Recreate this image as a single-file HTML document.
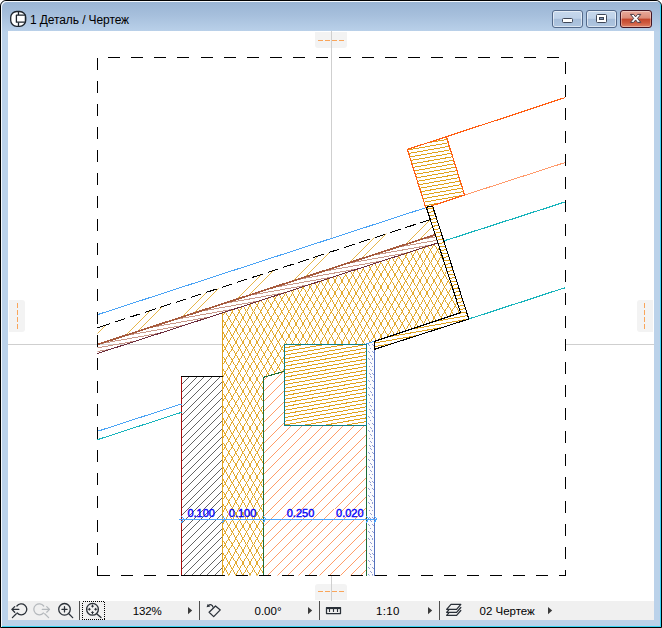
<!DOCTYPE html>
<html><head><meta charset="utf-8"><title>1 Деталь / Чертеж</title>
<style>
html,body{margin:0;padding:0;background:#fff;}
body{width:662px;height:628px;position:relative;overflow:hidden;font-family:"Liberation Sans",sans-serif;}
#win{position:absolute;left:0;top:0;width:660px;height:626px;border:1px solid #000;border-radius:6px 6px 0 0;
 background:linear-gradient(#99b4d3 0px,#a6bfdc 14px,#b9d0e9 30px,#bbd2ea 31px,#bbd2ea 100%);overflow:hidden;}
#win:before{content:"";position:absolute;left:0;top:0;right:0;bottom:0;border-radius:5px 5px 0 0;
 box-shadow:inset 1px 1px 0 0 #f4f8fc, inset -1px -1px 0 0 #3ad4f4;}
#client{position:absolute;left:8px;top:31px;width:646px;height:570px;background:#fff;}
#tbar{position:absolute;left:8px;top:601px;width:646px;height:19px;background:#f0f0f0;}
#title{position:absolute;left:30px;top:10px;font-size:12px;line-height:17px;color:#000;white-space:nowrap;
 letter-spacing:-0.1px;}
.cb{position:absolute;top:10px;height:16px;width:29px;border:1px solid #53698a;border-radius:3px;
 box-shadow:inset 0 0 0 1px rgba(255,255,255,.55);
 background:linear-gradient(#c6d8ec 0,#bfd2e9 46%,#a6bdd9 50%,#afc6e0 100%);}
#bclose{border-color:#431422;background:linear-gradient(#e9aa9c 0,#dc8b78 45%,#c3452c 50%,#cf5a3f 75%,#de8268 100%);
 box-shadow:inset 0 0 0 1px rgba(255,255,255,.35);}
.lbl{position:absolute;top:604px;height:15px;line-height:15px;font-size:11.5px;color:#000;white-space:nowrap;}
svg{position:absolute;left:0;top:0;}
</style></head><body>
<div id="win">
 <div id="client" style="left:7px;top:30px"></div>
 <div id="tbar" style="left:7px;top:600px"></div>
 <div id="title" style="left:29px;top:11px">1 Деталь / Чертеж</div>
 <div class="cb" style="left:551px;top:9px"></div>
 <div class="cb" style="left:585px;top:9px"></div>
 <div class="cb" id="bclose" style="left:619px;top:9px;width:30px"></div>
</div>
<svg width="662" height="628" viewBox="0 0 662 628">
<g clip-path="url(#cView)">
<defs>
<clipPath id="cBlock"><polygon points="407.30,149.40 446.40,136.70 464.60,195.10 425.80,207.70"/></clipPath>
<clipPath id="cL"><polygon points="426.30,207.20 432.70,206.30 468.80,319.00 374.50,349.30 374.50,341.30 460.60,312.70"/></clipPath>
<clipPath id="cBand"><polygon points="97.50,344.50 435.26,234.76 437.91,242.90 97.50,353.50"/></clipPath>
<clipPath id="cGap"><polygon points="97.50,327.70 430.32,219.56 435.26,234.76 97.50,344.50"/></clipPath>
<clipPath id="cIns"><polygon points="222.50,312.89 437.91,242.90 460.60,312.70 374.50,341.30 366.50,343.90 366.50,344.50 284.50,344.50 284.50,371.30 263.50,377.30 263.50,575.50 222.50,575.50"/></clipPath>
<clipPath id="cMas"><polygon points="263.50,377.30 284.50,371.30 284.50,425.50 366.50,425.50 366.50,575.50 263.50,575.50"/></clipPath>
<clipPath id="cBeam"><rect x="284.5" y="344.5" width="82" height="81"/></clipPath>
<clipPath id="cGray"><rect x="181.5" y="376.5" width="41" height="199"/></clipPath>
<clipPath id="cStrip"><polygon points="366.50,343.90 374.50,341.30 374.50,575.50 366.50,575.50"/></clipPath>
<clipPath id="cView"><rect x="8" y="31" width="646" height="570"/></clipPath>
</defs>
<path d="M315,32H347V45a3,3 0 0 1 -3,3H318a3,3 0 0 1 -3,-3Z" fill="#f3f3f3"/>
<path d="M315,600H347V587a3,3 0 0 0 -3,-3H318a3,3 0 0 0 -3,3Z" fill="#f3f3f3"/>
<path d="M9,300V332H22a3,3 0 0 0 3,-3V303a3,3 0 0 0 -3,-3Z" fill="#f3f3f3"/>
<path d="M653,300V332H640a3,3 0 0 1 -3,-3V303a3,3 0 0 1 3,-3Z" fill="#f3f3f3"/>
<path d="M318,40.5 h5 m2,0 h5 m2,0 h5 m2,0 h5" stroke="#f9a55a" stroke-width="1" fill="none"/>
<path d="M318,591.5 h5 m2,0 h5 m2,0 h5 m2,0 h5" stroke="#f9a55a" stroke-width="1" fill="none"/>
<path d="M17.5,303 v5 m0,2 v5 m0,2 v5 m0,2 v5" stroke="#f9a55a" stroke-width="1" fill="none"/>
<path d="M644.5,303 v5 m0,2 v5 m0,2 v5 m0,2 v5" stroke="#f9a55a" stroke-width="1" fill="none"/>
<g stroke="#cfcfcf" stroke-width="1" shape-rendering="crispEdges">
<line x1="331.5" y1="31" x2="331.5" y2="238.63"/>
<line x1="331.5" y1="576" x2="331.5" y2="601"/>
<line x1="8" y1="344.5" x2="222" y2="344.5"/>
<line x1="566" y1="344.5" x2="654" y2="344.5"/>
</g>
<g shape-rendering="crispEdges" fill="none" stroke-width="1">
<path clip-path="url(#cBlock)" stroke="#e0a21c" d="M405,128.45L467,117.52M405,132.12L467,121.19M405,135.79L467,124.86M405,139.46L467,128.53M405,143.13L467,132.2M405,146.8L467,135.87M405,150.47L467,139.54M405,154.14L467,143.21M405,157.81L467,146.88M405,161.48L467,150.55M405,165.15L467,154.22M405,168.82L467,157.89M405,172.49L467,161.56M405,176.16L467,165.23M405,179.83L467,168.9M405,183.5L467,172.57M405,187.17L467,176.24M405,190.84L467,179.91M405,194.51L467,183.58M405,198.18L467,187.25M405,201.85L467,190.92M405,205.52L467,194.59M405,209.19L467,198.26M405,212.86L467,201.93M405,216.53L467,205.6M405,220.2L467,209.27M405,223.87L467,212.94M405,227.54L467,216.61"/>
<path clip-path="url(#cBeam)" stroke="#e0a21c" d="M283,337.14L368,322.15M283,340.81L368,325.82M283,344.48L368,329.49M283,348.15L368,333.16M283,351.82L368,336.83M283,355.49L368,340.5M283,359.16L368,344.17M283,362.83L368,347.84M283,366.5L368,351.51M283,370.17L368,355.18M283,373.84L368,358.85M283,377.51L368,362.52M283,381.18L368,366.19M283,384.85L368,369.86M283,388.52L368,373.53M283,392.19L368,377.2M283,395.86L368,380.87M283,399.53L368,384.54M283,403.2L368,388.21M283,406.87L368,391.88M283,410.54L368,395.55M283,414.21L368,399.22M283,417.88L368,402.89M283,421.55L368,406.56M283,425.22L368,410.23M283,428.89L368,413.9M283,432.56L368,417.57M283,436.23L368,421.24M283,439.9L368,424.91M283,443.57L368,428.58M283,447.24L368,432.25"/>
<path clip-path="url(#cL)" stroke="#e0a21c" d="M372,196.66L470,179.38M372,200.33L470,183.05M372,204L470,186.72M372,207.67L470,190.39M372,211.34L470,194.06M372,215.01L470,197.73M372,218.68L470,201.4M372,222.35L470,205.07M372,226.02L470,208.74M372,229.69L470,212.41M372,233.36L470,216.08M372,237.03L470,219.75M372,240.7L470,223.42M372,244.37L470,227.09M372,248.04L470,230.76M372,251.71L470,234.43M372,255.38L470,238.1M372,259.05L470,241.77M372,262.72L470,245.44M372,266.39L470,249.11M372,270.06L470,252.78M372,273.73L470,256.45M372,277.4L470,260.12M372,281.07L470,263.79M372,284.74L470,267.46M372,288.41L470,271.13M372,292.08L470,274.8M372,295.75L470,278.47M372,299.42L470,282.14M372,303.09L470,285.81M372,306.76L470,289.48M372,310.43L470,293.15M372,314.1L470,296.82M372,317.77L470,300.49M372,321.44L470,304.16M372,325.11L470,307.83M372,328.78L470,311.5M372,332.45L470,315.17M372,336.12L470,318.84M372,339.79L470,322.51M372,343.46L470,326.18M372,347.13L470,329.85M372,350.8L470,333.52M372,354.47L470,337.19M372,358.14L470,340.86M372,361.81L470,344.53M372,365.48L470,348.2M372,369.15L470,351.87M372,372.82L470,355.54"/>
<path clip-path="url(#cBand)" stroke="#c9998a" d="M96,226.98L440,166.32M96,230.65L440,169.99M96,234.32L440,173.66M96,237.99L440,177.33M96,241.66L440,181M96,245.33L440,184.67M96,249L440,188.34M96,252.67L440,192.01M96,256.34L440,195.68M96,260.01L440,199.35M96,263.68L440,203.02M96,267.35L440,206.69M96,271.02L440,210.36M96,274.69L440,214.03M96,278.36L440,217.7M96,282.03L440,221.37M96,285.7L440,225.04M96,289.37L440,228.71M96,293.04L440,232.38M96,296.71L440,236.05M96,300.38L440,239.72M96,304.05L440,243.39M96,307.72L440,247.06M96,311.39L440,250.73M96,315.06L440,254.4M96,318.73L440,258.07M96,322.4L440,261.74M96,326.07L440,265.41M96,329.74L440,269.08M96,333.41L440,272.75M96,337.08L440,276.42M96,340.75L440,280.09M96,344.42L440,283.76M96,348.09L440,287.43M96,351.76L440,291.1M96,355.43L440,294.77M96,359.1L440,298.44M96,362.77L440,302.11M96,366.44L440,305.78M96,370.11L440,309.45M96,373.78L440,313.12M96,377.45L440,316.79M96,381.12L440,320.46M96,384.79L440,324.13M96,388.46L440,327.8M96,392.13L440,331.47M96,395.8L440,335.14M96,399.47L440,338.81M96,403.14L440,342.48M96,406.81L440,346.15M96,410.48L440,349.82M96,414.15L440,353.49M96,417.82L440,357.16M96,421.49L440,360.83"/>
<path clip-path="url(#cGap)" stroke="#e0a21c" stroke-width="0.8" d="M90,295.6L440,-54.4M90,303.6L440,-46.4M90,333.3L440,-16.7M90,341.3L440,-8.7M90,371L440,21M90,379L440,29M90,408.7L440,58.7M90,416.7L440,66.7M90,446.4L440,96.4M90,454.4L440,104.4M90,484.1L440,134.1M90,492.1L440,142.1M90,521.8L440,171.8M90,529.8L440,179.8M90,559.5L440,209.5M90,567.5L440,217.5M90,597.2L440,247.2M90,605.2L440,255.2M90,634.9L440,284.9M90,642.9L440,292.9"/>
<path clip-path="url(#cIns)" stroke="#e0a21c" stroke-width="0.9" d="M-433.89,200L-214.5,580M-198.91,200L-418.3,580M-426.81,200L-207.42,580M-191.83,200L-411.22,580M-419.73,200L-200.34,580M-184.75,200L-404.14,580M-412.65,200L-193.26,580M-177.67,200L-397.06,580M-405.57,200L-186.18,580M-170.59,200L-389.98,580M-398.49,200L-179.1,580M-163.51,200L-382.9,580M-391.41,200L-172.02,580M-156.43,200L-375.82,580M-384.33,200L-164.94,580M-149.35,200L-368.74,580M-377.25,200L-157.86,580M-142.27,200L-361.66,580M-370.17,200L-150.78,580M-135.19,200L-354.58,580M-363.09,200L-143.7,580M-128.11,200L-347.5,580M-356.01,200L-136.62,580M-121.03,200L-340.42,580M-348.93,200L-129.54,580M-113.95,200L-333.34,580M-341.85,200L-122.46,580M-106.87,200L-326.26,580M-334.77,200L-115.38,580M-99.79,200L-319.18,580M-327.69,200L-108.3,580M-92.71,200L-312.1,580M-320.61,200L-101.22,580M-85.63,200L-305.02,580M-313.53,200L-94.14,580M-78.55,200L-297.94,580M-306.45,200L-87.06,580M-71.47,200L-290.86,580M-299.37,200L-79.98,580M-64.39,200L-283.78,580M-292.29,200L-72.9,580M-57.31,200L-276.7,580M-285.21,200L-65.82,580M-50.23,200L-269.62,580M-278.13,200L-58.74,580M-43.15,200L-262.54,580M-271.05,200L-51.66,580M-36.07,200L-255.46,580M-263.97,200L-44.58,580M-28.99,200L-248.38,580M-256.89,200L-37.5,580M-21.91,200L-241.3,580M-249.81,200L-30.42,580M-14.83,200L-234.22,580M-242.73,200L-23.34,580M-7.75,200L-227.14,580M-235.65,200L-16.26,580M-0.67,200L-220.06,580M-228.57,200L-9.18,580M6.41,200L-212.98,580M-221.49,200L-2.1,580M13.49,200L-205.9,580M-214.41,200L4.98,580M20.57,200L-198.82,580M-207.33,200L12.06,580M27.65,200L-191.74,580M-200.25,200L19.14,580M34.73,200L-184.66,580M-193.17,200L26.22,580M41.81,200L-177.58,580M-186.09,200L33.3,580M48.89,200L-170.5,580M-179.01,200L40.38,580M55.97,200L-163.42,580M-171.93,200L47.46,580M63.05,200L-156.34,580M-164.85,200L54.54,580M70.13,200L-149.26,580M-157.77,200L61.62,580M77.21,200L-142.18,580M-150.69,200L68.7,580M84.29,200L-135.1,580M-143.61,200L75.78,580M91.37,200L-128.02,580M-136.53,200L82.86,580M98.45,200L-120.94,580M-129.45,200L89.94,580M105.53,200L-113.86,580M-122.37,200L97.02,580M112.61,200L-106.78,580M-115.29,200L104.1,580M119.69,200L-99.7,580M-108.21,200L111.18,580M126.77,200L-92.62,580M-101.13,200L118.26,580M133.85,200L-85.54,580M-94.05,200L125.34,580M140.93,200L-78.46,580M-86.97,200L132.42,580M148.01,200L-71.38,580M-79.89,200L139.5,580M155.09,200L-64.3,580M-72.81,200L146.58,580M162.17,200L-57.22,580M-65.73,200L153.66,580M169.25,200L-50.14,580M-58.65,200L160.74,580M176.33,200L-43.06,580M-51.57,200L167.82,580M183.41,200L-35.98,580M-44.49,200L174.9,580M190.49,200L-28.9,580M-37.41,200L181.98,580M197.57,200L-21.82,580M-30.33,200L189.06,580M204.65,200L-14.74,580M-23.25,200L196.14,580M211.73,200L-7.66,580M-16.17,200L203.22,580M218.81,200L-0.58,580M-9.09,200L210.3,580M225.89,200L6.5,580M-2.01,200L217.38,580M232.97,200L13.58,580M5.07,200L224.46,580M240.05,200L20.66,580M12.15,200L231.54,580M247.13,200L27.74,580M19.23,200L238.62,580M254.21,200L34.82,580M26.31,200L245.7,580M261.29,200L41.9,580M33.39,200L252.78,580M268.37,200L48.98,580M40.47,200L259.86,580M275.45,200L56.06,580M47.55,200L266.94,580M282.53,200L63.14,580M54.63,200L274.02,580M289.61,200L70.22,580M61.71,200L281.1,580M296.69,200L77.3,580M68.79,200L288.18,580M303.77,200L84.38,580M75.87,200L295.26,580M310.85,200L91.46,580M82.95,200L302.34,580M317.93,200L98.54,580M90.03,200L309.42,580M325.01,200L105.62,580M97.11,200L316.5,580M332.09,200L112.7,580M104.19,200L323.58,580M339.17,200L119.78,580M111.27,200L330.66,580M346.25,200L126.86,580M118.35,200L337.74,580M353.33,200L133.94,580M125.43,200L344.82,580M360.41,200L141.02,580M132.51,200L351.9,580M367.49,200L148.1,580M139.59,200L358.98,580M374.57,200L155.18,580M146.67,200L366.06,580M381.65,200L162.26,580M153.75,200L373.14,580M388.73,200L169.34,580M160.83,200L380.22,580M395.81,200L176.42,580M167.91,200L387.3,580M402.89,200L183.5,580M174.99,200L394.38,580M409.97,200L190.58,580M182.07,200L401.46,580M417.05,200L197.66,580M189.15,200L408.54,580M424.13,200L204.74,580M196.23,200L415.62,580M431.21,200L211.82,580M203.31,200L422.7,580M438.29,200L218.9,580M210.39,200L429.78,580M445.37,200L225.98,580M217.47,200L436.86,580M452.45,200L233.06,580M224.55,200L443.94,580M459.53,200L240.14,580M231.63,200L451.02,580M466.61,200L247.22,580M238.71,200L458.1,580M473.69,200L254.3,580M245.79,200L465.18,580M480.77,200L261.38,580M252.87,200L472.26,580M487.85,200L268.46,580M259.95,200L479.34,580M494.93,200L275.54,580M267.03,200L486.42,580M502.01,200L282.62,580M274.11,200L493.5,580M509.09,200L289.7,580M281.19,200L500.58,580M516.17,200L296.78,580M288.27,200L507.66,580M523.25,200L303.86,580M295.35,200L514.74,580M530.33,200L310.94,580M302.43,200L521.82,580M537.41,200L318.02,580M309.51,200L528.9,580M544.49,200L325.1,580M316.59,200L535.98,580M551.57,200L332.18,580M323.67,200L543.06,580M558.65,200L339.26,580M330.75,200L550.14,580M565.73,200L346.34,580M337.83,200L557.22,580M572.81,200L353.42,580M344.91,200L564.3,580M579.89,200L360.5,580M351.99,200L571.38,580M586.97,200L367.58,580M359.07,200L578.46,580M594.05,200L374.66,580M366.15,200L585.54,580M601.13,200L381.74,580M373.23,200L592.62,580M608.21,200L388.82,580M380.31,200L599.7,580M615.29,200L395.9,580M387.39,200L606.78,580M622.37,200L402.98,580M394.47,200L613.86,580M629.45,200L410.06,580M401.55,200L620.94,580M636.53,200L417.14,580M408.63,200L628.02,580M643.61,200L424.22,580M415.71,200L635.1,580M650.69,200L431.3,580M422.79,200L642.18,580M657.77,200L438.38,580M429.87,200L649.26,580M664.85,200L445.46,580M436.95,200L656.34,580M671.93,200L452.54,580M444.03,200L663.42,580M679.01,200L459.62,580M451.11,200L670.5,580M686.09,200L466.7,580M458.19,200L677.58,580M693.17,200L473.78,580M465.27,200L684.66,580M700.25,200L480.86,580M472.35,200L691.74,580M707.33,200L487.94,580M479.43,200L698.82,580M714.41,200L495.02,580M486.51,200L705.9,580M721.49,200L502.1,580M493.59,200L712.98,580M728.57,200L509.18,580M500.67,200L720.06,580M735.65,200L516.26,580M507.75,200L727.14,580M742.73,200L523.34,580M514.83,200L734.22,580M749.81,200L530.42,580M521.91,200L741.3,580M756.89,200L537.5,580M528.99,200L748.38,580M763.97,200L544.58,580M536.07,200L755.46,580M771.05,200L551.66,580M543.15,200L762.54,580M778.13,200L558.74,580M550.23,200L769.62,580M785.21,200L565.82,580M557.31,200L776.7,580M792.29,200L572.9,580M564.39,200L783.78,580M799.37,200L579.98,580M571.47,200L790.86,580M806.45,200L587.06,580M578.55,200L797.94,580M813.53,200L594.14,580M585.63,200L805.02,580M820.61,200L601.22,580M592.71,200L812.1,580M827.69,200L608.3,580M599.79,200L819.18,580M834.77,200L615.38,580M606.87,200L826.26,580M841.85,200L622.46,580M613.95,200L833.34,580M848.93,200L629.54,580M621.03,200L840.42,580M856.01,200L636.62,580M628.11,200L847.5,580M863.09,200L643.7,580M635.19,200L854.58,580M870.17,200L650.78,580M642.27,200L861.66,580M877.25,200L657.86,580M649.35,200L868.74,580M884.33,200L664.94,580M656.43,200L875.82,580M891.41,200L672.02,580M663.51,200L882.9,580M898.49,200L679.1,580M670.59,200L889.98,580M905.57,200L686.18,580M677.67,200L897.06,580M912.65,200L693.26,580M684.75,200L904.14,580M919.73,200L700.34,580M691.83,200L911.22,580M926.81,200L707.42,580"/>
<path clip-path="url(#cMas)" stroke="#ff7c36" stroke-width="0.75" d="M262,350.82L368,244.82M262,361.26L368,255.26M262,371.7L368,265.7M262,382.14L368,276.14M262,392.58L368,286.58M262,403.02L368,297.02M262,413.46L368,307.46M262,423.9L368,317.9M262,434.34L368,328.34M262,444.78L368,338.78M262,455.22L368,349.22M262,465.66L368,359.66M262,476.1L368,370.1M262,486.54L368,380.54M262,496.98L368,390.98M262,507.42L368,401.42M262,517.86L368,411.86M262,528.3L368,422.3M262,538.74L368,432.74M262,549.18L368,443.18M262,559.62L368,453.62M262,570.06L368,464.06M262,580.5L368,474.5M262,590.94L368,484.94M262,601.38L368,495.38M262,611.82L368,505.82M262,622.26L368,516.26M262,632.7L368,526.7M262,643.14L368,537.14M262,653.58L368,547.58M262,664.02L368,558.02M262,674.46L368,568.46M262,684.9L368,578.9M262,695.34L368,589.34"/>
<path clip-path="url(#cGray)" stroke="#303030" stroke-width="0.75" d="M180,362.6L224,318.6M180,370.33L224,326.33M180,378.07L224,334.07M180,385.8L224,341.8M180,393.53L224,349.53M180,401.27L224,357.27M180,409L224,365M180,416.73L224,372.73M180,424.46L224,380.46M180,432.2L224,388.2M180,439.93L224,395.93M180,447.66L224,403.66M180,455.4L224,411.4M180,463.13L224,419.13M180,470.86L224,426.86M180,478.6L224,434.6M180,486.33L224,442.33M180,494.06L224,450.06M180,501.79L224,457.79M180,509.53L224,465.53M180,517.26L224,473.26M180,524.99L224,480.99M180,532.73L224,488.73M180,540.46L224,496.46M180,548.19L224,504.19M180,555.93L224,511.93M180,563.66L224,519.66M180,571.39L224,527.39M180,579.12L224,535.12M180,586.86L224,542.86M180,594.59L224,550.59M180,602.32L224,558.32M180,610.06L224,566.06M180,617.79L224,573.79M180,625.52L224,581.52M180,633.26L224,589.26"/>
<polygon points="366.50,343.90 374.50,341.30 374.50,575.50 366.50,575.50" fill="#fcfcfe" stroke="none"/>
<path clip-path="url(#cStrip)" stroke="#7585c8" stroke-width="0.8" d="M368.5,344l1.6,1.8M372,344l1.6,1.8M370.2,347.6l1.6,1.8M368.5,351.2l1.6,1.8M372,351.2l1.6,1.8M370.2,354.8l1.6,1.8M368.5,358.4l1.6,1.8M372,358.4l1.6,1.8M370.2,362l1.6,1.8M368.5,365.6l1.6,1.8M372,365.6l1.6,1.8M370.2,369.2l1.6,1.8M368.5,372.8l1.6,1.8M372,372.8l1.6,1.8M370.2,376.4l1.6,1.8M368.5,380l1.6,1.8M372,380l1.6,1.8M370.2,383.6l1.6,1.8M368.5,387.2l1.6,1.8M372,387.2l1.6,1.8M370.2,390.8l1.6,1.8M368.5,394.4l1.6,1.8M372,394.4l1.6,1.8M370.2,398l1.6,1.8M368.5,401.6l1.6,1.8M372,401.6l1.6,1.8M370.2,405.2l1.6,1.8M368.5,408.8l1.6,1.8M372,408.8l1.6,1.8M370.2,412.4l1.6,1.8M368.5,416l1.6,1.8M372,416l1.6,1.8M370.2,419.6l1.6,1.8M368.5,423.2l1.6,1.8M372,423.2l1.6,1.8M370.2,426.8l1.6,1.8M368.5,430.4l1.6,1.8M372,430.4l1.6,1.8M370.2,434l1.6,1.8M368.5,437.6l1.6,1.8M372,437.6l1.6,1.8M370.2,441.2l1.6,1.8M368.5,444.8l1.6,1.8M372,444.8l1.6,1.8M370.2,448.4l1.6,1.8M368.5,452l1.6,1.8M372,452l1.6,1.8M370.2,455.6l1.6,1.8M368.5,459.2l1.6,1.8M372,459.2l1.6,1.8M370.2,462.8l1.6,1.8M368.5,466.4l1.6,1.8M372,466.4l1.6,1.8M370.2,470l1.6,1.8M368.5,473.6l1.6,1.8M372,473.6l1.6,1.8M370.2,477.2l1.6,1.8M368.5,480.8l1.6,1.8M372,480.8l1.6,1.8M370.2,484.4l1.6,1.8M368.5,488l1.6,1.8M372,488l1.6,1.8M370.2,491.6l1.6,1.8M368.5,495.2l1.6,1.8M372,495.2l1.6,1.8M370.2,498.8l1.6,1.8M368.5,502.4l1.6,1.8M372,502.4l1.6,1.8M370.2,506l1.6,1.8M368.5,509.6l1.6,1.8M372,509.6l1.6,1.8M370.2,513.2l1.6,1.8M368.5,516.8l1.6,1.8M372,516.8l1.6,1.8M370.2,520.4l1.6,1.8M368.5,524l1.6,1.8M372,524l1.6,1.8M370.2,527.6l1.6,1.8M368.5,531.2l1.6,1.8M372,531.2l1.6,1.8M370.2,534.8l1.6,1.8M368.5,538.4l1.6,1.8M372,538.4l1.6,1.8M370.2,542l1.6,1.8M368.5,545.6l1.6,1.8M372,545.6l1.6,1.8M370.2,549.2l1.6,1.8M368.5,552.8l1.6,1.8M372,552.8l1.6,1.8M370.2,556.4l1.6,1.8M368.5,560l1.6,1.8M372,560l1.6,1.8M370.2,563.6l1.6,1.8M368.5,567.2l1.6,1.8M372,567.2l1.6,1.8M370.2,570.8l1.6,1.8M368.5,574.4l1.6,1.8M372,574.4l1.6,1.8"/>
<line x1="222.5" y1="312.89" x2="222.5" y2="575.5" stroke="#e0a21c" stroke-width="1.3"/>
<line x1="181.5" y1="376.5" x2="181.5" y2="575.5" stroke="#a90c0c" stroke-width="1.2"/>
<line x1="181" y1="376.5" x2="222.5" y2="376.5" stroke="#000" stroke-width="1.2"/>
<line x1="181" y1="575.5" x2="223" y2="575.5" stroke="#000" stroke-width="1.2"/>
<line x1="263.5" y1="575.5" x2="263.5" y2="377.3" stroke="#1b6c38" stroke-width="1.3"/>
<line x1="263.5" y1="377.3" x2="284.5" y2="371.3" stroke="#1b6c38" stroke-width="1"/>
<line x1="366.5" y1="425.5" x2="366.5" y2="575.5" stroke="#1b6c38" stroke-width="1.3"/>
<line x1="374.5" y1="349.3" x2="374.5" y2="575.5" stroke="#5571bd" stroke-width="1.2"/>
<line x1="366.5" y1="343.9" x2="374.5" y2="341.3" stroke="#4aa3f5"/>
<rect x="284.5" y="344.5" width="82" height="81" stroke="#0b7f87" stroke-width="1.3"/>
<line x1="97.5" y1="353.5" x2="437.91" y2="242.9" stroke="#6c2c3c" stroke-width="1"/>
<line x1="97.5" y1="344.5" x2="435.26" y2="234.76" stroke="#a65a3c" stroke-width="1.7"/>
<line x1="97.5" y1="314.66" x2="426.3" y2="207.5" stroke="#4aa3f5"/>
<line x1="97.5" y1="431.3" x2="181.5" y2="404.01" stroke="#4aa3f5"/>
<line x1="97.5" y1="439.64" x2="181.5" y2="412.35" stroke="#19b4bc"/>
<line x1="443.81" y1="240.98" x2="565.5" y2="201.84" stroke="#19b4bc" stroke-width="1.2"/>
<line x1="468.8" y1="319" x2="565.5" y2="287.58" stroke="#19b4bc" stroke-width="1.2"/>
<line x1="97.5" y1="327.7" x2="110" y2="323.64" stroke="#000" stroke-width="1"/>
<line x1="114.5" y1="322.18" x2="430.32" y2="219.56" stroke="#000" stroke-width="1" stroke-dasharray="11.15 4.94"/>
<polygon points="407.30,149.40 446.40,136.70 464.60,195.10 425.80,207.70" stroke="#ff5f14" stroke-width="1.2"/>
<line x1="446.4" y1="136.7" x2="565.5" y2="97.5" stroke="#ff5f14" stroke-width="1.2"/>
<line x1="464.6" y1="195.1" x2="565.5" y2="162.4" stroke="#ff9a6b"/>
<polygon points="426.30,207.20 432.70,206.30 468.80,319.00 374.50,349.30 374.50,341.30 460.60,312.70" stroke="#000" stroke-width="1.05"/>
<line x1="179" y1="519.5" x2="376.5" y2="519.5" stroke="#4da6ff" stroke-width="1.2"/>
<path d="M181,522.5 l3,-3.5 l-3,-3" stroke="#4da6ff" stroke-width="1.2"/>
<path d="M222,522.5 l3,-3.5 l-3,-3" stroke="#4da6ff" stroke-width="1.2"/>
<path d="M263,522.5 l3,-3.5 l-3,-3" stroke="#4da6ff" stroke-width="1.2"/>
<path d="M366,522.5 l3,-3.5 l-3,-3" stroke="#4da6ff" stroke-width="1.2"/>
<path d="M374,522.5 l3,-3.5 l-3,-3" stroke="#4da6ff" stroke-width="1.2"/>
<path d="M97.5,575.5 H565.5 V57.5 H97.5 Z" stroke="#000" stroke-width="1.25" stroke-dasharray="12 11.085"/>
</g>
<g font-family="Liberation Sans, sans-serif" font-size="11px" fill="#0505fa" stroke="#0505fa" stroke-width="0.4" text-anchor="middle">
<text x="201.2" y="517">0.100</text>
<text x="242.6" y="517">0.100</text>
<text x="300.5" y="517">0.250</text>
<text x="349.8" y="517">0.020</text>
</g>
</g>
<g fill="none" stroke="#2a3038" stroke-width="1.3" stroke-linecap="round" stroke-linejoin="round">
<path d="M16.9,606.0 A5.5,5.5 0 1 1 17.2,613.0"/>
<path d="M18.8,609.4 H11.9 M14.7,606.6 L11.9,609.4 L14.7,612.2"/>
<path d="M16.3,613.7 L12.4,617.6"/>
<circle cx="64.5" cy="609.3" r="5.8"/>
<path d="M61.9,609.3 h5.2 M64.5,606.7 v5.2"/>
<path d="M68.8,613.8 L72.7,617.6"/>
<circle cx="92.5" cy="609.3" r="5.9"/>
<path d="M96.9,613.9 L101,617.6"/>
</g>
<g fill="#2a3038" stroke="none">
<path d="M92.5,607.7 l-1.7,-2 h1.2 v-1.3 h1 v1.3 h1.2 z"/>
<path d="M92.5,610.9 l-1.7,2 h1.2 v1.3 h1 v-1.3 h1.2 z"/>
<path d="M90.9,609.3 l-2,-1.7 v1.2 h-1.3 v1 h1.3 v1.2 z"/>
<path d="M94.1,609.3 l2,-1.7 v1.2 h1.3 v1 h-1.3 v1.2 z"/>
</g>
<g fill="none" stroke="#b4b8bc" stroke-width="1.25" stroke-linecap="round" stroke-linejoin="round">
<path d="M43.7,606.0 A5.5,5.5 0 1 0 43.4,613.0"/>
<path d="M42.3,609.4 H49.5 M46.7,606.6 L49.5,609.4 L46.7,612.2"/>
<path d="M44.7,613.7 L48.6,617.6"/>
</g>
<rect x="82.5" y="601.5" width="22" height="18" fill="none" stroke="#000" stroke-width="1" stroke-dasharray="1 1" shape-rendering="crispEdges"/>
<line x1="79.5" y1="601" x2="79.5" y2="620" stroke="#505050" stroke-width="1" shape-rendering="crispEdges"/>
<line x1="199.5" y1="601" x2="199.5" y2="620" stroke="#505050" stroke-width="1" shape-rendering="crispEdges"/>
<line x1="319.5" y1="601" x2="319.5" y2="620" stroke="#505050" stroke-width="1" shape-rendering="crispEdges"/>
<line x1="439.5" y1="601" x2="439.5" y2="620" stroke="#505050" stroke-width="1" shape-rendering="crispEdges"/>
<path d="M188,607 l4.2,3.6 l-4.2,3.6 z" fill="#3a3a3a"/>
<path d="M308,607 l4.2,3.6 l-4.2,3.6 z" fill="#3a3a3a"/>
<path d="M428,607 l4.2,3.6 l-4.2,3.6 z" fill="#3a3a3a"/>
<path d="M548,607 l4.2,3.6 l-4.2,3.6 z" fill="#3a3a3a"/>
<g fill="none" stroke="#2a3038" stroke-width="1.25" stroke-linejoin="round" stroke-linecap="round">
<path d="M215.5,606 L220.3,609.9 L213.7,616.6 L209.1,612.3 Z"/>
<path d="M212.9,606.8 A2.6,2.6 0 0 0 208.7,605.3"/>
</g>
<path d="M206.6,607.2 L207.6,603.9 L210.3,606.6 Z" fill="#2a3038"/>
<rect x="326.5" y="607.5" width="14" height="6" fill="none" stroke="#2a3038" stroke-width="1.25" stroke-linejoin="round"/>
<rect x="326.5" y="607.5" width="14" height="1.6" fill="#2a3038"/>
<path d="M329.5,608 v4 M333.5,608 v4 M337.5,608 v4" stroke="#2a3038" stroke-width="1.1" fill="none"/>
<g fill="none" stroke="#2a3038" stroke-width="1.25" stroke-linejoin="round" stroke-linecap="round">
<path d="M451,604.4 H460.8 L456.6,609.3 H446.6 Z"/>
<path d="M448.6,610.1 L446.6,612.4 H456.6 L460.8,607.5"/>
<path d="M448.6,613.1 L446.6,615.4 H456.6 L460.8,610.5"/>
</g>
<g fill="#fff" stroke="#1d242c" stroke-width="1.3" stroke-linejoin="round">
<rect x="10.7" y="11.5" width="15" height="14.8" rx="6" ry="6"/>
<path d="M18.5,11.6 V15 M18.5,22.3 V26.2" fill="none"/>
<rect x="16.4" y="15.1" width="9" height="7.1"/>
</g>
<!-- caption glyphs -->
<rect x="562.5" y="18.5" width="10" height="4" rx="1" fill="#fff" stroke="#3e4656" stroke-width="1"/>
<rect x="596.5" y="14.5" width="10" height="8" rx="1" fill="#fff" stroke="#3e4656" stroke-width="1"/>
<rect x="599.5" y="17.5" width="4" height="2" fill="#7d93b5" stroke="#3e4656" stroke-width="1"/>
<path d="M630.4,14.4 L633.7,14.4 L635.6,16.9 L637.5,14.4 L640.8,14.4 L637.5,18.4 L640.8,22.4 L637.5,22.4 L635.6,19.9 L633.7,22.4 L630.4,22.4 L633.7,18.4 Z" fill="#fff" stroke="#4a3a44" stroke-width="1" stroke-linejoin="round"/>
</svg>
<div class="lbl" style="left:132.8px;letter-spacing:-0.2px">132%</div>
<div class="lbl" style="left:254.5px">0.00°</div>
<div class="lbl" style="left:376px;letter-spacing:0.3px">1:10</div>
<div class="lbl" style="left:479.5px">02 Чертеж</div>
</body></html>
